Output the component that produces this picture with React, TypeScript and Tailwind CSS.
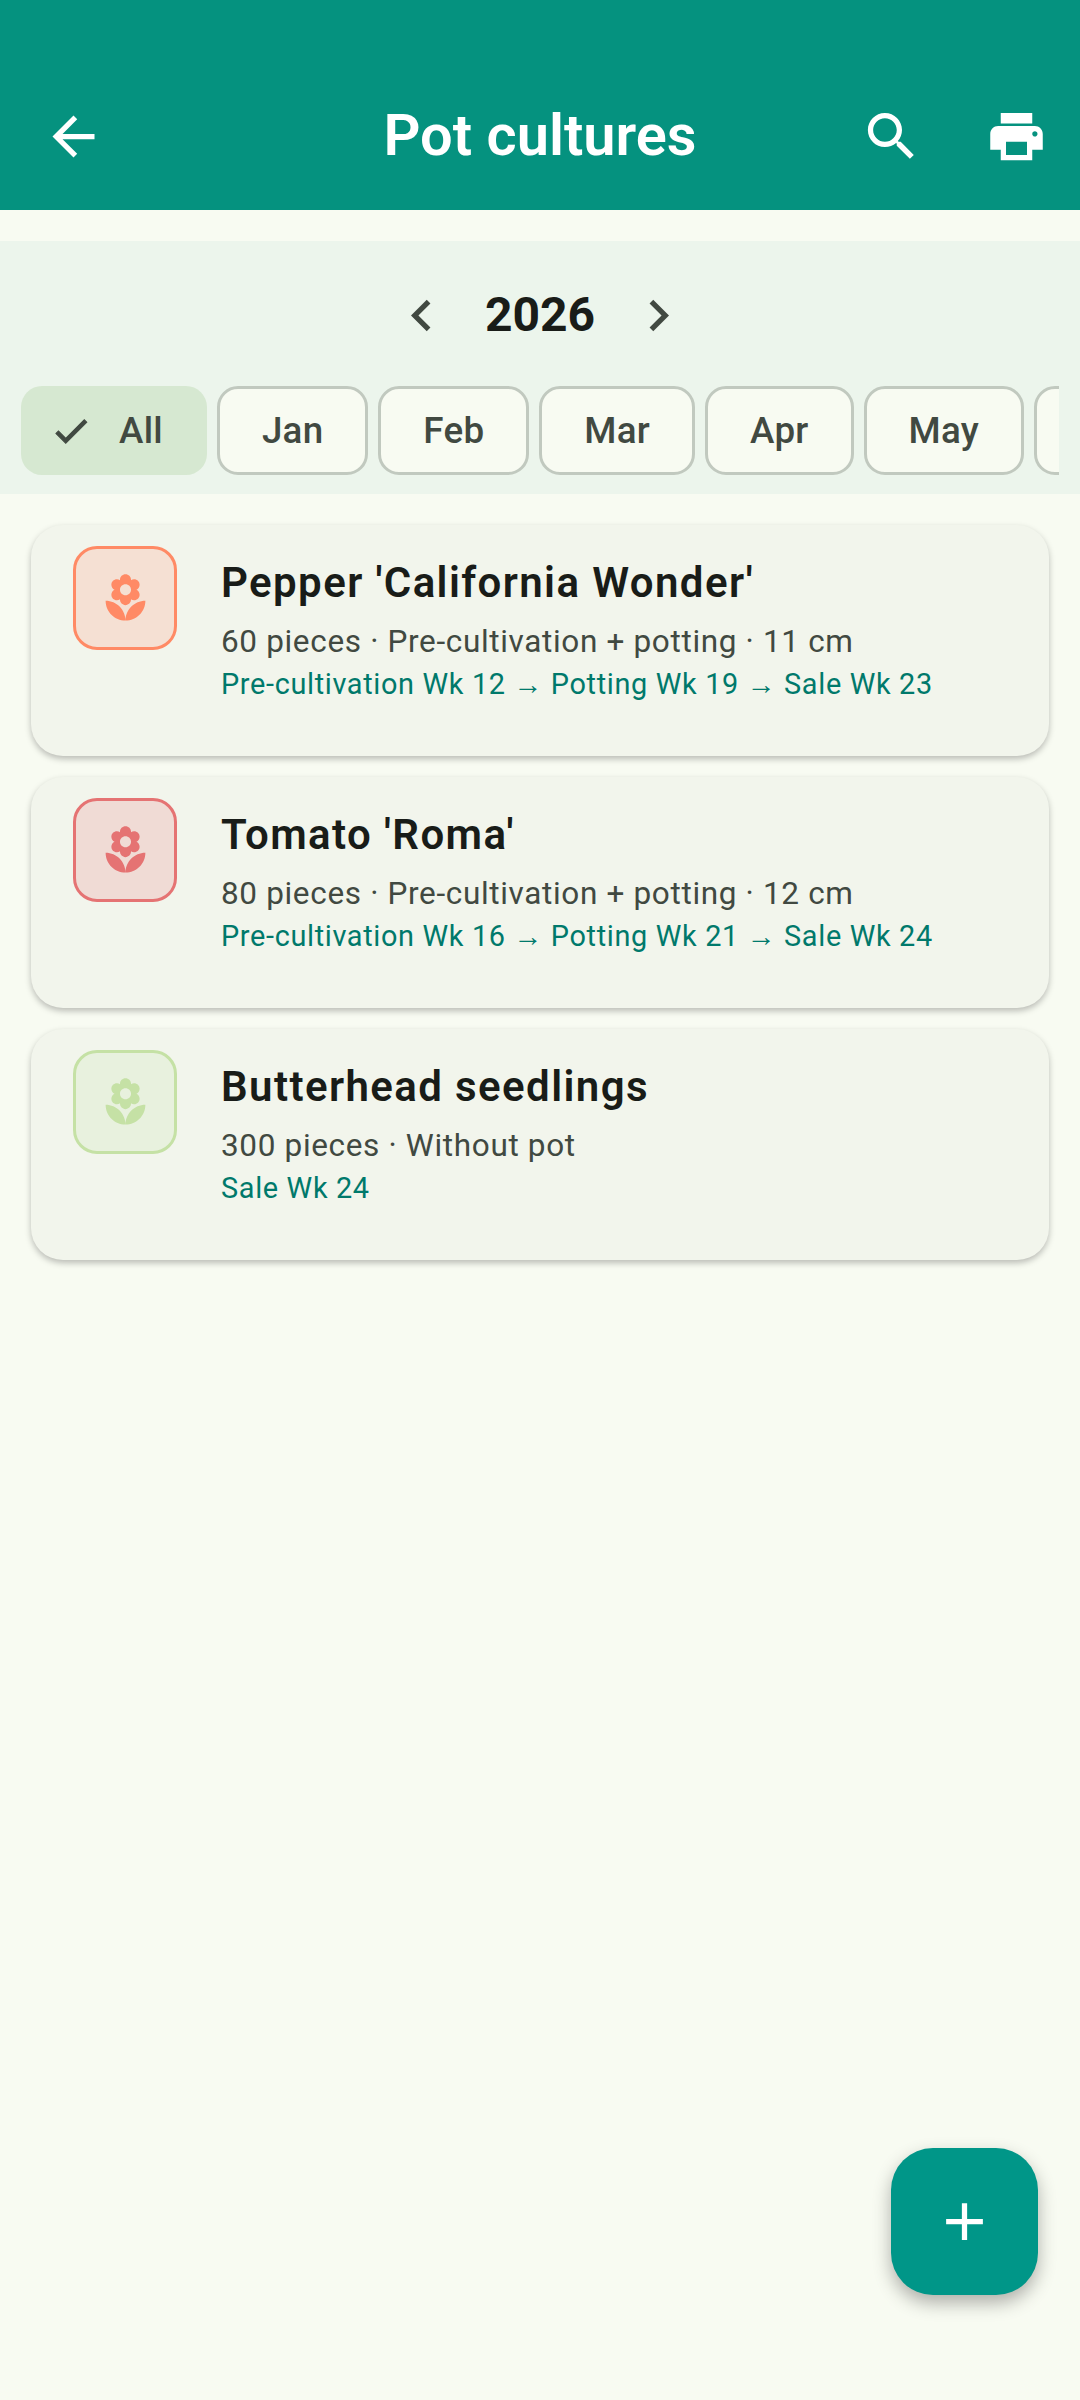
import React from "react";

type Culture = {
  name: string;
  detail: string;
  schedule: string;
  tone: string;
  tint: string;
};

const cultures: Culture[] = [
  {
    name: "Pepper 'California Wonder'",
    detail: "60 pieces · Pre-cultivation + potting · 11 cm",
    schedule: "Pre-cultivation Wk 12 → Potting Wk 19 → Sale Wk 23",
    tone: "border-[#FF8A65] text-[#FF8A65]",
    tint: "bg-[#F5E0D3]",
  },
  {
    name: "Tomato 'Roma'",
    detail: "80 pieces · Pre-cultivation + potting · 12 cm",
    schedule: "Pre-cultivation Wk 16 → Potting Wk 21 → Sale Wk 24",
    tone: "border-[#E57373] text-[#E57373]",
    tint: "bg-[#F0DBD5]",
  },
  {
    name: "Butterhead seedlings",
    detail: "300 pieces · Without pot",
    schedule: "Sale Wk 24",
    tone: "border-[#C5E1A5] text-[#C5E1A5]",
    tint: "bg-[#E8F1DE]",
  },
];

const months = ["Jan", "Feb", "Mar", "Apr", "May", "Jun"];

function Icon({ d, className }: { d: string; className: string }) {
  return (
    <svg viewBox="0 0 24 24" fill="currentColor" className={className}>
      <path d={d} />
    </svg>
  );
}

const paths = {
  back: "M20 11H7.83l5.59-5.59L12 4l-8 8 8 8 1.41-1.41L7.83 13H20v-2z",
  search:
    "M15.5 14h-.79l-.28-.27C15.41 12.59 16 11.11 16 9.5 16 5.91 13.09 3 9.5 3S3 5.91 3 9.5 5.91 16 9.5 16c1.61 0 3.09-.59 4.23-1.57l.27.28v.79l5 4.99L20.49 19l-4.99-5zm-6 0C7.01 14 5 11.99 5 9.5S7.01 5 9.5 5 14 7.01 14 9.5 11.99 14 9.5 14z",
  print:
    "M19 8H5c-1.66 0-3 1.34-3 3v6h4v4h12v-4h4v-6c0-1.66-1.34-3-3-3zm-3 11H8v-5h8v5zm3-7c-.55 0-1-.45-1-1s.45-1 1-1 1 .45 1 1-.45 1-1 1zm-1-9H6v4h12V3z",
  left: "M15.41 7.41 14 6l-6 6 6 6 1.41-1.41L10.83 12z",
  right: "M10 6 8.59 7.41 13.17 12l-4.58 4.59L10 18l6-6z",
  check: "M9 16.17 4.83 12l-1.42 1.41L9 19 21 7l-1.41-1.41z",
  add: "M19 13h-6v6h-2v-6H5v-2h6V5h2v6h6v2z",
  florist:
    "M12 22c4.97 0 9-4.03 9-9-4.97 0-9 4.03-9 9zM5.6 10.25c0 1.38 1.12 2.5 2.5 2.5.53 0 1.01-.16 1.42-.44l-.02.19c0 1.38 1.12 2.5 2.5 2.5s2.5-1.12 2.5-2.5l-.02-.19c.4.28.89.44 1.42.44 1.38 0 2.5-1.12 2.5-2.5 0-1-.59-1.85-1.43-2.25.84-.4 1.43-1.25 1.43-2.25 0-1.38-1.12-2.5-2.5-2.5-.53 0-1.01.16-1.42.44l.02-.19C14.5 2.12 13.38 1 12 1S9.5 2.12 9.5 3.5l.02.19c-.4-.28-.89-.44-1.42-.44-1.38 0-2.5 1.12-2.5 2.5 0 1 .59 1.85 1.43 2.25-.84.4-1.43 1.25-1.43 2.25zM12 5.5c1.38 0 2.5 1.12 2.5 2.5s-1.12 2.5-2.5 2.5S9.5 9.38 9.5 8s1.12-2.5 2.5-2.5zM3 13c0 4.97 4.03 9 9 9 0-4.97-4.03-9-9-9z",
};

function CultureCard({ culture }: { culture: Culture }) {
  return (
    <div className="flex h-[231px] gap-[44px] rounded-[32px] bg-[#F2F5EC] pl-[42px] pt-[21px] shadow-[0_3px_6px_rgba(0,0,0,0.25)]">
      <div className={`flex size-[104px] shrink-0 items-center justify-center rounded-[24px] border-[3px] ${culture.tone} ${culture.tint}`}>
        <Icon d={paths.florist} className="size-[53px]" />
      </div>
      <div className="flex flex-col">
        <p className="mt-[9px] text-[42px] leading-[56px] font-semibold tracking-[1.4px] text-[#191C18]">{culture.name}</p>
        <p className="mt-[9px] text-[31.5px] leading-[44px] tracking-[0.66px] text-[#414941]">{culture.detail}</p>
        <p className="text-[28.875px] leading-[40px] tracking-[0.66px] text-[#00796B]">{culture.schedule}</p>
      </div>
    </div>
  );
}

export default function App() {
  return (
    <div className="relative h-[2400px] w-[1080px] overflow-hidden bg-[#F8FBF2] font-['Roboto',sans-serif]">
      <header className="grid h-[210px] grid-cols-[1fr_auto_1fr] items-center bg-[#05927F] pt-[63px] text-white">
        <button className="ml-[10px] flex size-[126px] items-center justify-center">
          <Icon d={paths.back} className="size-[63px]" />
        </button>
        <h1 className="pb-[2px] text-[57.75px] font-semibold">Pot cultures</h1>
        <div className="flex justify-end">
          <button className="flex size-[127px] items-center justify-center pl-[3px]">
            <Icon d={paths.search} className="size-[63px]" />
          </button>
          <button className="flex size-[127px] items-center justify-center">
            <Icon d={paths.print} className="size-[63px]" />
          </button>
        </div>
      </header>

      <section className="mt-[31px] h-[253px] bg-[#ECF5EC]">
        <div className="flex h-[145px] items-center justify-center gap-[32px] pt-[3px] text-[#414941]">
          <Icon d={paths.left} className="size-[63px]" />
          <span className="text-[48px] font-bold text-[#191C18]">2026</span>
          <Icon d={paths.right} className="size-[63px]" />
        </div>
        <div className="ml-[21px] flex w-[1038px] gap-[10px] overflow-hidden text-[36.75px] font-medium tracking-[0.26px] text-[#414941]">
          <div className="flex h-[89px] shrink-0 items-center gap-[27px] rounded-[21px] bg-[#D6E8D1] pl-[29px] pr-[44px]">
            <Icon d={paths.check} className="size-[42px] stroke-current stroke-[0.6]" />
            All
          </div>
          {months.map((m) => (
            <div key={m} className="flex h-[89px] shrink-0 items-center rounded-[21px] border-[3px] border-[#C1C9BF] bg-[#F8FBF2] px-[42px]">
              {m}
            </div>
          ))}
        </div>
      </section>

      <main className="flex flex-col gap-[21px] px-[31px] pt-[31px]">
        {cultures.map((c) => (
          <CultureCard key={c.name} culture={c} />
        ))}
      </main>

      <button className="absolute left-[891px] top-[2148px] flex size-[147px] items-center justify-center rounded-[42px] bg-[#009688] text-white shadow-[0_8px_18px_rgba(0,0,0,0.3)]">
        <Icon d={paths.add} className="size-[63px]" />
      </button>
    </div>
  );
}
